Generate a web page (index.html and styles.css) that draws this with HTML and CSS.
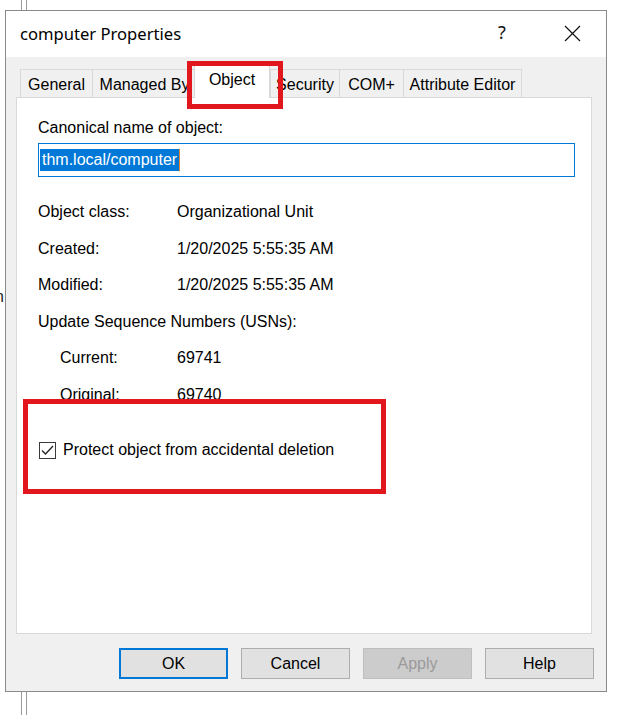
FILE: index.html
```html
<!DOCTYPE html>
<html>
<head>
<meta charset="utf-8">
<link rel="stylesheet" href="styles.css">
</head>
<body>
<div class="backdrop">
  <div class="bg-line l1"></div>
  <div class="bg-line l2"></div>
  <span class="bg-frag">n</span>
</div>

<div class="dialog">
  <div class="titlebar">
    <div class="title">computer Properties</div>
    <div class="tb-btns">
      <div class="tb-btn help">?</div>
      <div class="tb-btn close">
        <svg width="17" height="17" viewBox="0 0 17 17"><path d="M1 1 L16 16 M16 1 L1 16" stroke="#111" stroke-width="1.2" fill="none"/></svg>
      </div>
    </div>
  </div>
  <div class="body">
    <div class="tabstrip">
      <div class="tab t-general">General</div>
      <div class="tab t-managed">Managed By</div>
      <div class="tab t-object active">Object</div>
      <div class="tab t-security">Security</div>
      <div class="tab t-com">COM+</div>
      <div class="tab t-attr">Attribute Editor</div>
    </div>
    <div class="panel">
      <div class="label">Canonical name of object:</div>
      <div class="field"><span class="sel">thm.local/computer</span></div>
      <div class="rows">
        <div class="row"><span class="k">Object class:</span><span class="v">Organizational Unit</span></div>
        <div class="row"><span class="k">Created:</span><span class="v">1/20/2025 5:55:35 AM</span></div>
        <div class="row"><span class="k">Modified:</span><span class="v">1/20/2025 5:55:35 AM</span></div>
        <div class="row"><span class="k">Update Sequence Numbers (USNs):</span></div>
        <div class="row sub"><span class="k">Current:</span><span class="v">69741</span></div>
        <div class="row sub"><span class="k">Original:</span><span class="v">69740</span></div>
      </div>
      <div class="check-row">
        <span class="checkbox">
          <svg width="15" height="15" viewBox="0 0 15 15"><path d="M2 7.5 L5.5 11 L13 3" stroke="#222" stroke-width="1.3" fill="none"/></svg>
        </span>
        <span class="check-label">Protect object from accidental deletion</span>
      </div>
    </div>
    <div class="buttons">
      <div class="btn default">OK</div>
      <div class="btn">Cancel</div>
      <div class="btn disabled">Apply</div>
      <div class="btn">Help</div>
    </div>
  </div>
</div>

<div class="mark mark-tab"></div>
<div class="mark mark-check"></div>
</body>
</html>
```

FILE: styles.css
```css
html, body {
  margin: 0;
  padding: 0;
  background: #ffffff;
}
body {
  width: 622px;
  height: 715px;
  overflow: hidden;
  position: relative;
  font-family: "Liberation Sans", Arial, sans-serif;
  font-size: 16px;
  color: #000;
}
.backdrop {
  position: absolute;
  inset: 0;
}
.bg-line {
  position: absolute;
  top: 0;
  bottom: 0;
  width: 1px;
  background: #9a9a9a;
}
.l1 { left: 21px; }
.l2 { left: 26px; }
.bg-frag {
  position: absolute;
  left: -5px;
  top: 288px;
  font-size: 16px;
  color: #222;
}

.dialog {
  position: relative;
  margin: 10px 0 0 5px;
  width: 602px;
  height: 682px;
  box-sizing: border-box;
  border: 1px solid #8a8a8a;
  background: #f0f0f0;
  display: flex;
  flex-direction: column;
}
.titlebar {
  height: 46px;
  background: #ffffff;
  display: flex;
  align-items: center;
  justify-content: space-between;
  padding-left: 14px;
}
.title {
  font-family: "Noto Sans", "Open Sans", sans-serif;
  font-size: 16.6px;
  color: #000;
  margin-top: -2px;
}
.tb-btns {
  display: flex;
  height: 100%;
}
.tb-btn {
  width: 68px;
  height: 100%;
  display: flex;
  align-items: center;
  justify-content: center;
}
.help {
  font-family: "Noto Sans", sans-serif;
  font-size: 18px;
  color: #111;
  margin-top: -2px;
  margin-right: 2px;
}
.close svg { margin-top: -2px; }

.body {
  flex: 1;
  display: flex;
  flex-direction: column;
  padding: 9px 12px 12px 10px;
}
.tabstrip {
  height: 31px;
  display: flex;
  align-items: flex-end;
  padding-left: 4px;
  position: relative;
  z-index: 2;
}
.tab {
  height: 28px;
  box-sizing: border-box;
  border: 1px solid #d9d9d9;
  border-bottom: none;
  margin-right: -1px;
  background: #f0f0f0;
  display: flex;
  align-items: center;
  justify-content: center;
  font-size: 16px;
  line-height: 1;
  white-space: nowrap;
  padding-top: 2px;
}
.t-general { width: 73px; }
.t-managed { width: 105px; }
.t-object { width: 76px; }
.t-security { width: 70px; }
.t-com { width: 65px; }
.t-attr { width: 119px; }
.tab.active {
  height: 33px;
  background: #ffffff;
  margin-left: -2px;
  margin-right: 0;
  margin-bottom: -1px;
  padding-top: 0;
  padding-bottom: 5px;
  position: relative;
  z-index: 3;
}
.panel {
  flex: 1;
  margin-right: 2px;
  background: #ffffff;
  border: 1px solid #d9d9d9;
  padding: 20px 0 0 21px;
  position: relative;
  z-index: 1;
}
.label {
  line-height: 20px;
}
.field {
  margin-top: 5px;
  width: 537px;
  height: 34px;
  box-sizing: border-box;
  border: 1px solid #0078d7;
  padding-left: 1px;
  display: flex;
  align-items: center;
}
.sel {
  background: #0078d7;
  color: #ffffff;
  line-height: 22px;
  padding: 0 2px 0 2px;
  border-right: 1px solid #e8822a;
}
.rows {
  margin-top: 17px;
}
.row {
  height: 36.5px;
  display: flex;
  align-items: center;
  white-space: nowrap;
}
.row .k {
  width: 139px;
  flex: none;
}
.row.sub .k {
  width: 117px;
  margin-left: 22px;
}
.check-row {
  margin-top: 20px;
  height: 34px;
  display: flex;
  align-items: center;
  padding-left: 1px;
}
.checkbox {
  width: 17px;
  height: 17px;
  box-sizing: border-box;
  border: 1px solid #3a3a3a;
  background: #fff;
  display: flex;
  align-items: center;
  justify-content: center;
  margin-right: 7px;
}
.buttons {
  margin-top: 14px;
  display: flex;
  justify-content: flex-end;
  gap: 13px;
}
.btn {
  width: 109px;
  height: 31px;
  box-sizing: border-box;
  border: 1px solid #adadad;
  background: #e1e1e1;
  display: flex;
  align-items: center;
  justify-content: center;
  font-size: 16px;
}
.btn.default {
  border: 2px solid #0078d7;
}
.btn.disabled {
  background: #cccccc;
  border-color: #bfbfbf;
  color: #9a9a9a;
}

.mark {
  position: absolute;
  border: 5px solid #e2161d;
  box-sizing: border-box;
  z-index: 10;
}
.mark-tab {
  left: 187px;
  top: 61px;
  width: 96px;
  height: 48px;
}
.mark-check {
  left: 23px;
  top: 399px;
  width: 363px;
  height: 95px;
}
```
